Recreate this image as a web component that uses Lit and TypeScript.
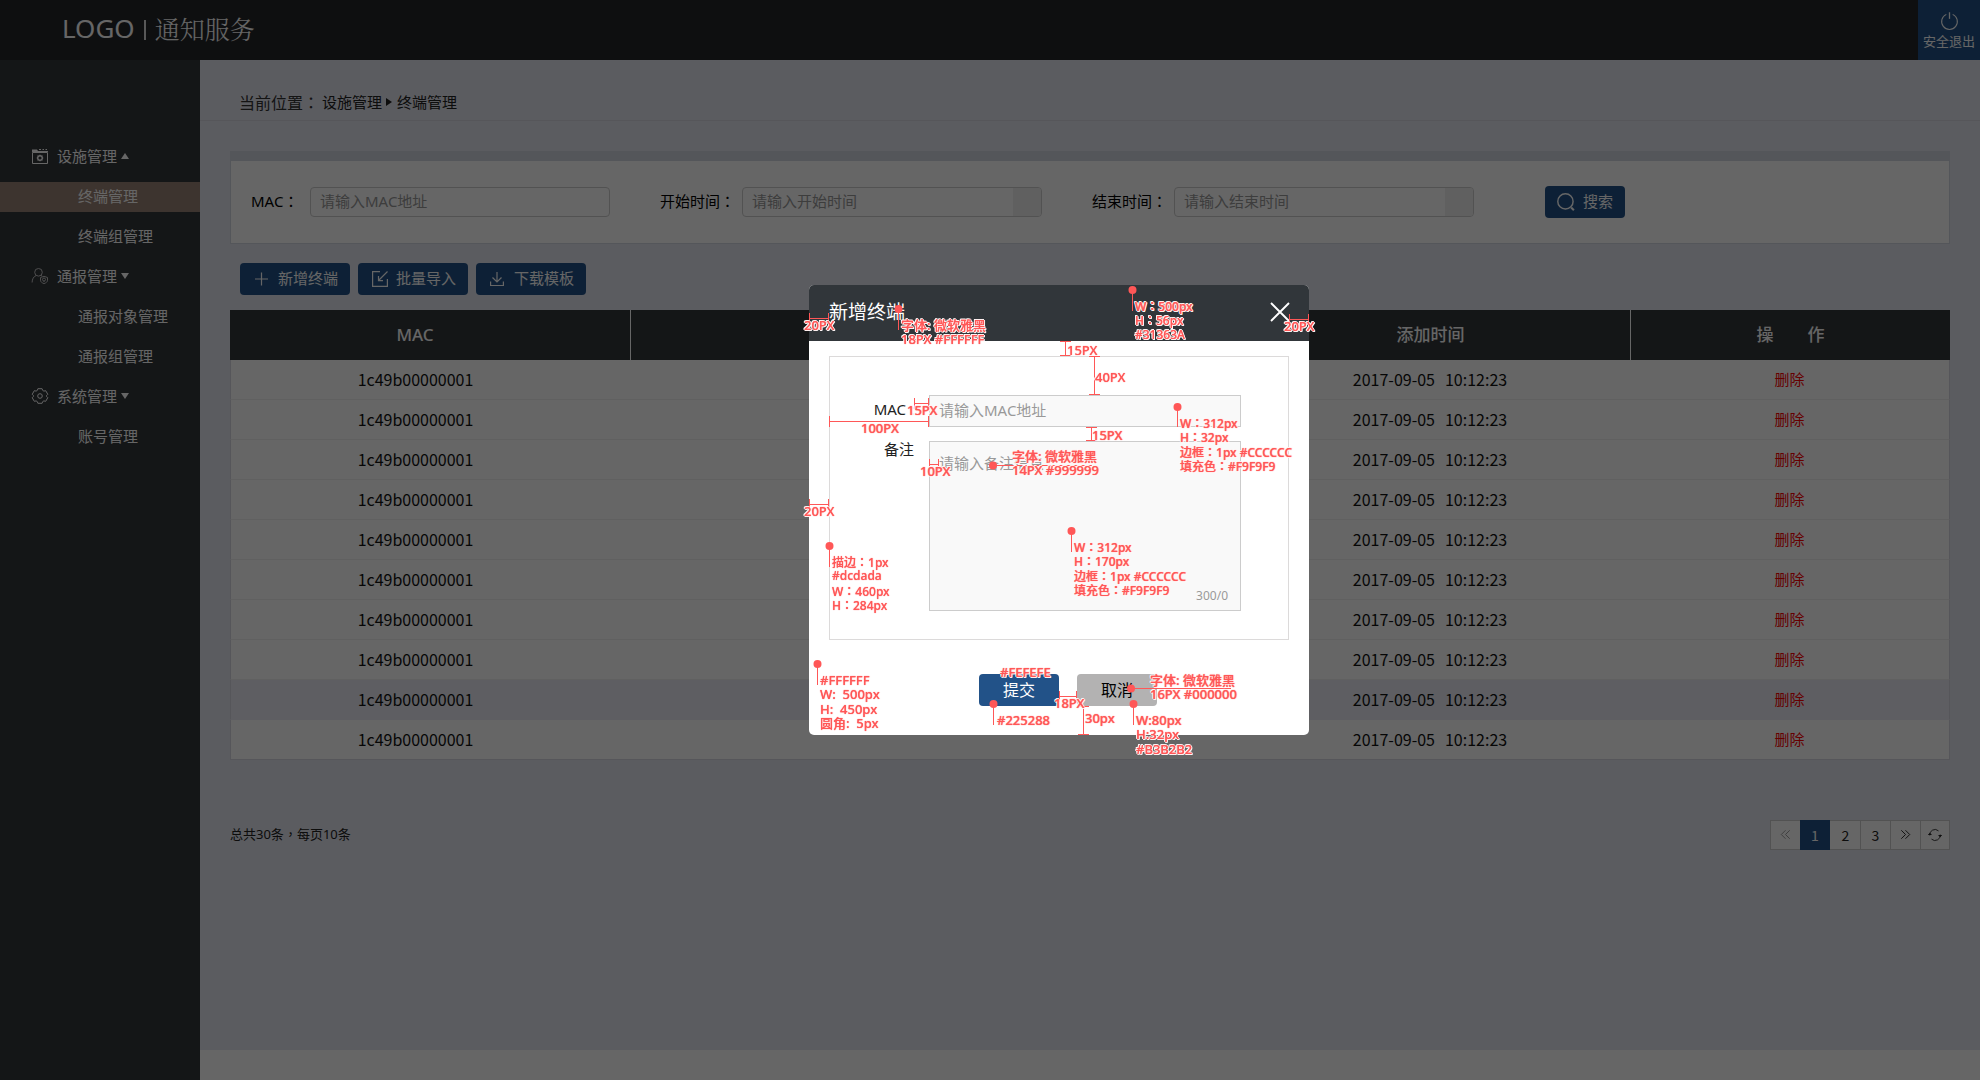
import { LitElement, html, svg, css } from "lit";
import { customElement } from "lit/decorators.js";

/* Full-width punctuation is set in a face that centres it in its cell. */
const cn = (text: string) =>
  text
    .split(/([：，])/)
    .map((part) => (part === "：" || part === "，" ? html`<span class="punct">${part}</span>` : part));

const icon = (body: unknown, size = 16) =>
  html`<svg class="icon" width=${size} height=${size} viewBox="0 0 16 16" fill="none" stroke="currentColor" aria-hidden="true">${body}</svg>`;

const icons = {
  facility: svg`<path d="M.5 4.5h15v11H.5z"/><path d="M0 4V1.500h5l1 1.500h10v1z" fill="currentColor" stroke="none"/><path d="M7 1.500h2M10.500 1.500h1.500M13.500 1.500H15"/><circle cx="8" cy="10" r="2.300" stroke-width="1.400"/><path d="M8 6.700v1M8 12.300v1M4.700 10h1M10.300 10h1M5.700 7.700l.7.7M9.600 11.600l.7.7M10.300 7.700l-.7.7M6.400 11.600l-.7.7"/>`,
  notice: svg`<g opacity=".7"><circle cx="6.500" cy="4.300" r="3.800"/><path d="M4.200 7.500C1.500 8.700.2 11 .1 14.500M8.800 7.300l1.200.8"/><path d="M8.500 9.500l3.500-1.200 3.500 1.200v2.700c0 1.700-1.500 2.700-3.500 3.400-2-.7-3.500-1.700-3.500-3.400z"/><circle cx="12" cy="11.500" r="1.500"/><path d="M12 13v1"/></g>`,
  system: svg`<path d="M5.300 2.400L5.900.7h4.200l.6 1.700 1.200.7 1.800-.4 2.100 3.600L14.500 7.600v.8l1.300 1.300-2.100 3.600-1.800-.4-1.200.7-.6 1.700H5.900l-.6-1.700-1.200-.7-1.800.4L.2 9.700 1.500 8.400v-.8L.2 6.300l2.100-3.600 1.800.4z" stroke-linejoin="round"/><circle cx="8" cy="8" r="2.300"/>`,
  plus: svg`<path d="M7.500 1.500v13M1 8h13" stroke-width="1.200"/>`,
  importIn: svg`<path d="M8 .6H.6v14.800h14.800V8" stroke-width="1.200"/><path d="M15.500.5L6.500 9.500M6.500 5v4.700H11" stroke-width="1.200"/>`,
  download: svg`<path d="M7 1v9.500M2.500 6.500L7 11l4.500-4.500M.6 10.500v4h12.800v-4" stroke-width="1.200"/>`,
  search: svg`<circle cx="7.500" cy="7.500" r="6.800" stroke-width="1.300"/><path d="M12.600 12.900l2.400 2.500" stroke-width="1.800"/>`,
  power: svg`<path d="M5 1.300a7.400 7.400 0 1 0 6 0" stroke-width="1"/><path d="M8-.7v6.200" stroke-width="1.200"/>`,
  prev: svg`<path d="M8 3.500L3.500 8 8 12.500M12.500 3.500L8 8l4.500 4.500"/>`,
  next: svg`<path d="M3.500 3.500L8 8l-4.500 4.500M8 3.500L12.500 8 8 12.500"/>`,
  refresh: svg`<path d="M2 8.500a6 6 0 0 1 10-5.200M14 7.500a6 6 0 0 1-10 5.200"/><path d="M.3 8l1.800-2L4 8M12 8l1.900 2 1.800-2" fill="currentColor"/>`,
  close: svg`<path d="M0 0l16 16M16 0L0 16" stroke-width="1.700"/>`,
};

interface Group {
  title: string;
  glyph: unknown;
  open: boolean;
  items: string[];
}

const menu: Group[] = [
  { title: "设施管理", glyph: icons.facility, open: true, items: ["终端管理", "终端组管理"] },
  { title: "通报管理", glyph: icons.notice, open: false, items: ["通报对象管理", "通报组管理"] },
  { title: "系统管理", glyph: icons.system, open: false, items: ["账号管理"] },
];

const rows = Array.from({ length: 10 }, (_, i) => ({
  mac: "1c49b00000001",
  date: "2017-09-05",
  time: "10:12:23",
  hover: i === 8,
}));

/* Spec notes on the dialog; coordinates count from the dialog's corner. */
const notes: { x: number; y: number; lines: string[]; small?: boolean }[] = [
  { x: -5, y: 41, lines: ["20PX"] },
  { x: 92, y: 41, lines: ["字体: 微软雅黑", "18PX #FFFFFF"] },
  { x: 258, y: 66, lines: ["15PX"] },
  { x: 326, y: 22, lines: ["W：500px", "H：56px", "#31363A"], small: true },
  { x: 286, y: 93, lines: ["40PX"] },
  { x: 475, y: 42, lines: ["20PX"] },
  { x: 98, y: 126, lines: ["15PX"] },
  { x: 52, y: 144, lines: ["100PX"] },
  { x: 111, y: 187, lines: ["10PX"] },
  { x: 203, y: 172, lines: ["字体: 微软雅黑", "14PX #999999"] },
  { x: 371, y: 139, lines: ["W：312px", "H：32px", "边框：1px #CCCCCC", "填充色：#F9F9F9"], small: true },
  { x: 283, y: 151, lines: ["15PX"] },
  { x: -5, y: 227, lines: ["20PX"] },
  { x: 23, y: 278, lines: ["描边：1px", "#dcdada", "W：460px", "H：284px"], small: true },
  { x: 265, y: 263, lines: ["W：312px", "H：170px", "边框：1px #CCCCCC", "填充色：#F9F9F9"], small: true },
  { x: 11, y: 396, lines: ["#FFFFFF", "W:  500px", "H:  450px", "圆角:  5px"] },
  { x: 191, y: 388, lines: ["#FEFEFE"] },
  { x: 188, y: 436, lines: ["#225288"] },
  { x: 245, y: 419, lines: ["18PX"] },
  { x: 341, y: 396, lines: ["字体: 微软雅黑", "16PX #000000"] },
  { x: 276, y: 434, lines: ["30px"] },
  { x: 327, y: 436, lines: ["W:80px", "H:32px", "#B3B2B2"] },
];

/* x, y, length, direction */
const rulers: [number, number, number, "h" | "v"][] = [
  [0, 33, 20, "h"],
  [256, 56, 15, "v"],
  [285, 71, 39, "v"],
  [480, 34, 20, "h"],
  [105, 118, 15, "h"],
  [20, 136, 100, "h"],
  [120, 179, 10, "h"],
  [282, 142, 14, "v"],
  [0, 219, 20, "h"],
  [250, 411, 18, "h"],
  [274, 421, 29, "v"],
];

/* x, y, stem length, direction */
const pins: [number, number, number, "h" | "v"][] = [
  [89, 24, 21, "v"],
  [323, 5, 21, "v"],
  [184, 180, 99, "h"],
  [368, 122, 20, "v"],
  [20, 261, 21, "v"],
  [262, 246, 21, "v"],
  [8, 379, 21, "v"],
  [184, 419, 21, "v"],
  [322, 403, 100, "h"],
  [324, 419, 21, "v"],
];

@customElement("app-root")
export class AppRoot extends LitElement {
  static styles = css`
    :host {
      display: block;
      font-family: "Noto Sans", "Noto Sans CJK SC", sans-serif;
      font-size: 15px;
      line-height: 20px;
      color: #222;
    }
    * {
      box-sizing: border-box;
    }
    button,
    input,
    textarea {
      font: inherit;
      margin: 0;
    }
    button {
      border: 0;
      padding: 0;
      cursor: pointer;
      white-space: nowrap;
    }
    a {
      color: inherit;
      text-decoration: none;
    }
    .punct {
      font-family: "Noto Sans CJK TC", sans-serif;
    }
    .icon {
      flex: none;
      overflow: visible;
    }
    .page {
      display: grid;
      grid-template: 60px 1fr / 200px 1fr;
      min-height: 100vh;
    }
    .top {
      grid-column: 1 / -1;
      display: flex;
      justify-content: space-between;
      background: #23262a;
      color: #fff;
    }
    .brand {
      display: flex;
      align-items: center;
      gap: 9px;
      padding: 0 0 2px 62px;
      font-size: 26px;
      line-height: 54px;
      font-weight: 400;
      margin: 0;
    }
    .brand > span {
      margin-bottom: 2px;
    }
    .brand .brand-bar {
      width: 2px;
      height: 20px;
      margin: 2px 0 0;
      background: #ddd;
    }
    .brand-name {
      font-family: "Noto Serif CJK SC", "Noto Sans CJK SC", serif;
      font-size: 25px;
      font-weight: 300;
    }
    .exit {
      display: flex;
      flex-direction: column;
      align-items: center;
      justify-content: flex-end;
      gap: 1px;
      width: 62px;
      padding-bottom: 9px;
      background: #225288;
      color: #fff;
      font-size: 13px;
    }
    .side {
      display: flex;
      flex-direction: column;
      gap: 10px;
      padding-top: 82px;
      background: #34373b;
      color: #fff;
      line-height: 28px;
    }
    .group,
    .sub {
      display: flex;
      align-items: center;
      height: 30px;
      padding-bottom: 2px;
    }
    .group {
      gap: 9px;
      padding-left: 32px;
      background: none;
      color: inherit;
      text-align: left;
    }
    .sub {
      padding-left: 78px;
    }
    .sub.on {
      background: #998276;
    }
    .caret {
      border: 4px solid transparent;
      border-width: 0 4px 6px;
      border-bottom-color: currentColor;
      margin-left: -5px;
    }
    .caret.down {
      border-width: 6px 4px 0;
      border-top-color: currentColor;
    }
    .main {
      display: flex;
      flex-direction: column;
      min-width: 0;
      background: #e4e6f0;
    }
    .crumbs {
      display: flex;
      align-items: center;
      height: 61px;
      padding: 24px 39px 0;
      border-bottom: 1px solid #d6d8e0;
    }
    .crumbs-label {
      margin-right: 3px;
      font-size: 16px;
      color: #333;
    }
    .crumb-arrow {
      margin: 0 5px 0 4px;
      border-left: 6px solid currentColor;
      border-top: 4px solid transparent;
      border-bottom: 4px solid transparent;
    }
    .content {
      flex: 1;
      padding: 30px;
    }
    .filter {
      display: flex;
      align-items: center;
      gap: 50px;
      padding: 25px 20px;
      background: #fff;
      border: 1px solid #d2d6e0;
      border-top-width: 10px;
    }
    .field {
      display: flex;
      align-items: center;
    }
    .field-label {
      width: 82px;
      padding-bottom: 2px;
      color: #000;
    }
    .field-label.short {
      width: 59px;
    }
    .box {
      display: flex;
      width: 300px;
      height: 30px;
      border: 1px solid #ccc;
      border-radius: 4px;
      overflow: hidden;
    }
    .box input {
      flex: 1;
      min-width: 0;
      border: 0;
      outline: 0;
      padding: 0 9px 2px;
      background: none;
    }
    .pick {
      width: 28px;
      background: #f0f0f0;
    }
    ::placeholder {
      color: #999;
      opacity: 1;
    }
    .btn {
      display: flex;
      align-items: center;
      gap: 8px;
      height: 32px;
      padding: 0 14px;
      border-radius: 4px;
      background: #225288;
      color: #fff;
    }
    .btn > span {
      padding-bottom: 2px;
    }
    .btn.find {
      width: 80px;
      margin-left: 21px;
      padding: 0 12px;
    }
    .tools {
      display: flex;
      gap: 8px;
      margin: 19px 10px 15px;
    }
    .tools .btn {
      width: 110px;
    }
    .grid {
      width: 100%;
      table-layout: fixed;
      border-collapse: separate;
      border-spacing: 0;
      background: #fff;
      text-align: center;
    }
    .grid th {
      height: 50px;
      padding: 0;
      background: #34373b;
      color: #fff;
      font-size: 17px;
      font-weight: 500;
      white-space: pre;
    }
    .grid th + th {
      border-left: 1px solid #fff;
    }
    .grid td {
      height: 40px;
      padding: 0 0 2px;
      border-bottom: 1px solid #f0f0f0;
      color: #111;
      font-family: "Noto Sans CJK SC", sans-serif;
      font-size: 16px;
    }
    .grid td:first-child {
      border-left: 1px solid #d6d8e0;
    }
    .grid td:last-child {
      border-right: 1px solid #d6d8e0;
    }
    .grid tr:last-child td {
      border-bottom-color: #d6d8e0;
    }
    .grid th:first-child,
    .grid td:first-child {
      padding-right: 30px;
    }
    .grid tr.hover td {
      background: #eaecf4;
      border-bottom-color: #eaecf4;
    }
    .col-mac {
      width: 400px;
    }
    .col-act {
      width: 320px;
    }
    .col-time {
      width: 400px;
    }
    .stamp {
      display: flex;
      justify-content: center;
      gap: 10px;
    }
    .remove {
      background: none;
      color: #ff0000;
      font-size: 15px;
    }
    .foot {
      display: flex;
      justify-content: space-between;
      align-items: center;
      margin-top: 60px;
      font-size: 13px;
    }
    .foot > span {
      padding-bottom: 2px;
    }
    .pager {
      display: flex;
      height: 30px;
      border: 1px solid #ccc;
      background: #fff;
    }
    .pager button {
      display: flex;
      align-items: center;
      justify-content: center;
      width: 30px;
      padding-bottom: 1px;
      background: none;
      color: #222;
      font-family: "Noto Sans CJK SC", sans-serif;
      font-size: 14px;
    }
    .pager button:first-child,
    .pager button:last-child {
      width: 29px;
    }
    .pager button + button {
      border-left: 1px solid #ccc;
    }
    .pager button:disabled {
      color: #999;
    }
    .pager button.now {
      margin: -1px 0;
      border: 0;
      background: #225288;
      color: #fff;
    }
    .pager .now + button {
      border-left-color: transparent;
    }
    .bottom {
      height: 30px;
      background: #fff;
    }
    .veil {
      position: fixed;
      inset: 0;
      display: flex;
      align-items: center;
      justify-content: center;
      padding: 0 0 60px 138px;
      background: rgba(0, 0, 0, 0.6);
    }
    .dialog {
      position: relative;
      width: 500px;
      border-radius: 5px;
      background: #fff;
    }
    .dialog-head {
      display: flex;
      align-items: center;
      justify-content: space-between;
      height: 56px;
      padding: 0 20px 2px;
      border-radius: 5px 5px 0 0;
      background: #31363a;
      color: #fff;
    }
    .dialog-title {
      margin: 0;
      font-size: 19px;
      font-weight: 400;
    }
    .shut {
      display: flex;
      background: none;
      color: #fff;
    }
    .form {
      display: grid;
      grid-template-columns: 84px 312px;
      align-items: start;
      align-content: start;
      gap: 14px 15px;
      height: 284px;
      margin: 15px 20px 34px;
      padding-top: 38px;
      border: 1px solid #dcdada;
    }
    .form-label {
      padding-top: 4px;
      text-align: right;
    }
    .form-label.upper {
      padding-top: 0;
      line-height: 16px;
    }
    .text,
    .area {
      display: block;
      width: 100%;
      border: 1px solid #ccc;
      border-radius: 0;
      outline: 0;
      padding: 0 9px 2px;
      background: #f9f9f9;
    }
    .text {
      height: 32px;
    }
    .area {
      height: 170px;
      padding: 11px 9px;
      resize: none;
    }
    .area-wrap {
      position: relative;
    }
    .count {
      position: absolute;
      right: 13px;
      bottom: 5px;
      font-size: 12px;
      color: #999;
    }
    .actions {
      display: flex;
      justify-content: center;
      gap: 18px;
      padding: 0 0 29px 18px;
    }
    .actions .btn {
      width: 80px;
      justify-content: center;
      padding: 0 0 1px;
      font-size: 16px;
    }
    .actions .plain {
      background: #b3b2b2;
      color: #000;
    }
    .notes {
      position: absolute;
      inset: 0;
      pointer-events: none;
      color: #ff5757;
    }
    .lines {
      position: absolute;
      inset: 0;
      overflow: visible;
    }
    .note {
      position: absolute;
      margin-top: -8px;
      font-size: 13px;
      font-weight: 500;
      line-height: 14px;
      white-space: pre;
      text-shadow: 0 0 1px #ff5757, 1px 0 #fff, -1px 0 #fff, 0 1px #fff, 0 -1px #fff, 1px 1px #fff, -1px -1px #fff;
    }
    .note.small {
      font-size: 12px;
    }
  `;

  private ruler([x, y, n, dir]: [number, number, number, "h" | "v"]) {
    return dir === "h"
      ? svg`<path d="M${x} ${y + 0.5}h${n}M${x + 0.5} ${y - 5}v11M${x + n - 0.5} ${y - 5}v11"/>`
      : svg`<path d="M${x + 0.5} ${y}v${n}M${x - 5} ${y + 0.5}h11M${x - 5} ${y + n - 0.5}h11"/>`;
  }

  private pin([x, y, n, dir]: [number, number, number, "h" | "v"]) {
    const cx = x + (dir === "v" ? 0.5 : 0);
    const cy = y + (dir === "h" ? 0.5 : 0);
    return svg`<circle cx=${cx} cy=${cy} r="4" fill="currentColor" stroke="none"/><path d="M${cx} ${cy}${dir}${n}"/>`;
  }

  private dateField(id: string, label: string) {
    return html`<div class="field">
      <label class="field-label" for=${id}>${cn(label + "：")}</label>
      <div class="box"><input id=${id} type="text" placeholder=${"请输入" + label} /><span class="pick"></span></div>
    </div>`;
  }

  render() {
    return html`
      <div class="page">
        <header class="top">
          <h1 class="brand"><span>LOGO</span><span class="brand-bar"></span><span class="brand-name">通知服务</span></h1>
          <button class="exit">${icon(icons.power, 17)}<span>安全退出</span></button>
        </header>

        <nav class="side">
          ${menu.map(
            (g, gi) => html`
              <button class="group">${icon(g.glyph)}<span>${g.title}</span><span class="caret ${g.open ? "" : "down"}"></span></button>
              ${g.items.map((t, i) => html`<a class="sub ${gi === 0 && i === 0 ? "on" : ""}" href="#">${t}</a>`)}
            `
          )}
        </nav>

        <main class="main">
          <div class="crumbs">
            <span class="crumbs-label">${cn("当前位置：")}</span><a href="#">设施管理</a><span class="crumb-arrow"></span><a href="#">终端管理</a>
          </div>
          <div class="content">
            <form class="filter">
              <div class="field">
                <label class="field-label short" for="q-mac">${cn("MAC：")}</label>
                <div class="box"><input id="q-mac" type="text" placeholder="请输入MAC地址" /></div>
              </div>
              ${this.dateField("q-start", "开始时间")} ${this.dateField("q-end", "结束时间")}
              <button class="btn find" type="button">${icon(icons.search, 18)}<span>搜索</span></button>
            </form>

            <div class="tools">
              <button class="btn">${icon(icons.plus)}<span>新增终端</span></button>
              <button class="btn">${icon(icons.importIn)}<span>批量导入</span></button>
              <button class="btn">${icon(icons.download)}<span>下载模板</span></button>
            </div>

            <table class="grid">
              <colgroup>
                <col class="col-mac" />
                <col />
                <col class="col-time" />
                <col class="col-act" />
              </colgroup>
              <thead>
                <tr>
                  <th scope="col">MAC</th>
                  <th></th>
                  <th scope="col">添加时间</th>
                  <th scope="col">操　　作</th>
                </tr>
              </thead>
              <tbody>
                ${rows.map(
                  (r) => html`<tr class=${r.hover ? "hover" : ""}>
                    <td>${r.mac}</td>
                    <td></td>
                    <td><div class="stamp"><span>${r.date}</span><span>${r.time}</span></div></td>
                    <td><button class="remove">删除</button></td>
                  </tr>`
                )}
              </tbody>
            </table>

            <div class="foot">
              <span>${cn("总共30条，每页10条")}</span>
              <div class="pager">
                <button disabled aria-label="上一页">${icon(icons.prev, 15)}</button>
                <button class="now">1</button>
                <button>2</button>
                <button>3</button>
                <button aria-label="下一页">${icon(icons.next, 15)}</button>
                <button aria-label="刷新">${icon(icons.refresh, 14)}</button>
              </div>
            </div>
          </div>
          <div class="bottom"></div>
        </main>
      </div>

      <div class="veil">
        <section class="dialog" role="dialog" aria-labelledby="dlg-title">
          <div class="dialog-head">
            <h2 class="dialog-title" id="dlg-title">新增终端</h2>
            <button class="shut" aria-label="关闭">${icon(icons.close, 18)}</button>
          </div>
          <div class="form">
            <label class="form-label" for="f-mac">MAC :</label>
            <input class="text" id="f-mac" type="text" placeholder="请输入MAC地址" />
            <label class="form-label upper" for="f-note">备注</label>
            <div class="area-wrap">
              <textarea class="area" id="f-note" placeholder="请输入备注信息"></textarea>
              <span class="count">300/0</span>
            </div>
          </div>
          <div class="actions">
            <button class="btn">提交</button>
            <button class="btn plain">取消</button>
          </div>
          <div class="notes">
            <svg class="lines" width="500" height="450" fill="none" stroke="currentColor" aria-hidden="true">
              ${rulers.map((r) => this.ruler(r))} ${pins.map((p) => this.pin(p))}
            </svg>
            ${notes.map((n) =>
              n.lines.map(
                (t, i) =>
                  html`<span class="note ${n.small ? "small" : ""}" style="left:${n.x}px;top:${n.y + Math.round(i * 14.4)}px">${cn(t)}</span>`
              )
            )}
          </div>
        </section>
      </div>
    `;
  }
}
